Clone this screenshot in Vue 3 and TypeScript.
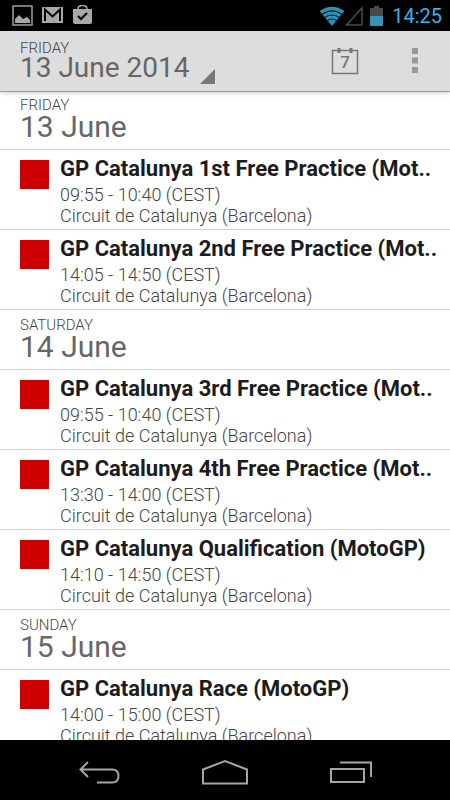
<script setup lang="ts">
interface AgendaEvent {
  title: string
  time: string
  place: string
}

interface AgendaDay {
  weekday: string
  date: string
  events: AgendaEvent[]
}

const place = 'Circuit de Catalunya (Barcelona)'

const days: AgendaDay[] = [
  {
    weekday: 'FRIDAY',
    date: '13 June',
    events: [
      { title: 'GP Catalunya 1st Free Practice (Mot..', time: '09:55 - 10:40 (CEST)', place },
      { title: 'GP Catalunya 2nd Free Practice (Mot..', time: '14:05 - 14:50 (CEST)', place },
    ],
  },
  {
    weekday: 'SATURDAY',
    date: '14 June',
    events: [
      { title: 'GP Catalunya 3rd Free Practice (Mot..', time: '09:55 - 10:40 (CEST)', place },
      { title: 'GP Catalunya 4th Free Practice (Mot..', time: '13:30 - 14:00 (CEST)', place },
      { title: 'GP Catalunya Qualification (MotoGP)', time: '14:10 - 14:50 (CEST)', place },
    ],
  },
  {
    weekday: 'SUNDAY',
    date: '15 June',
    events: [{ title: 'GP Catalunya Race (MotoGP)', time: '14:00 - 15:00 (CEST)', place }],
  },
]
</script>

<template>
  <div class="screen">
    <div class="status">
      <div class="notices">
        <svg width="21" height="21" viewBox="0 0 21 21" aria-hidden="true">
          <rect x="1" y="1" width="19" height="19" fill="none" stroke="#a0a0a0" stroke-width="1.5" />
          <path d="M3 18v-4l2-2 2-2 2 2 2 2 2-1 2-1 3 3v3z" fill="#a8a8a8" />
        </svg>
        <svg width="21" height="21" viewBox="0 0 21 21" aria-hidden="true">
          <rect x="0" y="2" width="21" height="16" fill="#a8a8a8" />
          <path d="M3 16V4.500l7.500 7L18 4.500V16" fill="none" stroke="#000" stroke-width="2" />
        </svg>
        <svg width="21" height="21" viewBox="0 0 21 21" aria-hidden="true">
          <path d="M6 5V4q0-3.500 4.500-3.500T15 4v1" fill="none" stroke="#a8a8a8" stroke-width="1.500" />
          <path d="M1 4h19v13q0 2-2 2H3q-2 0-2-2z" fill="#a8a8a8" />
          <path d="M6 11l3 3 6-6" fill="none" stroke="#000" stroke-width="2.200" />
        </svg>
      </div>
      <div class="signals">
        <svg width="26" height="20" viewBox="0 0 26 20" aria-hidden="true">
          <path d="M0.500 5Q13-3.500 25.500 5L13 20z" fill="#2f8fb8" />
          <path d="M3 8.200Q13 1.500 23 8.200M5.500 11.500Q13 6.500 20.500 11.500M8.500 14.500Q13 11.500 17.500 14.500" fill="none" stroke="#04151c" stroke-width="1.100" />
        </svg>
        <svg class="cell" width="18" height="20" viewBox="0 0 18 20" aria-hidden="true">
          <path d="M1.500 19H17V2z" fill="none" stroke="#4c4c4c" stroke-width="1.500" />
        </svg>
        <svg width="13" height="20" viewBox="0 0 13 20" aria-hidden="true">
          <path d="M0 2h4V0h5v2h4v8H0z" fill="#4a4a4a" />
          <path d="M0 10h13v10H0z" fill="#3593ba" />
        </svg>
        <span class="clock">14:25</span>
      </div>
    </div>

    <header class="bar">
      <button class="picker" type="button">
        <span class="heading">
          <span class="weekday">FRIDAY</span>
          <span class="date bar-date">13 June 2014</span>
        </span>
        <svg width="15" height="15" viewBox="0 0 15 15" aria-hidden="true">
          <path d="M15 0v15H0z" fill="#777" />
        </svg>
      </button>
      <div class="actions">
        <button class="icon-button" type="button" aria-label="Go to today">
          <svg width="28" height="28" viewBox="0 0 28 28" aria-hidden="true">
            <path d="M1.500 3.500h25v23h-25z" fill="none" stroke="#777" stroke-width="1.500" />
            <path d="M6.500 1h3v5h-3zM18.500 1h3v5h-3z" fill="#777" />
            <text class="today" x="14" y="21" text-anchor="middle">7</text>
          </svg>
        </button>
        <button class="icon-button" type="button" aria-label="More options">
          <svg width="6" height="26" viewBox="0 0 6 26" aria-hidden="true">
            <path d="M0 0h6v6H0zM0 9.500h6v6H0zM0 19h6v6H0z" fill="#999" />
          </svg>
        </button>
      </div>
    </header>

    <main class="agenda">
      <section v-for="day in days" :key="day.date">
        <h2 class="day">
          <span class="weekday">{{ day.weekday }}</span>
          <span class="date">{{ day.date }}</span>
        </h2>
        <article v-for="event in day.events" :key="event.title" class="event">
          <span class="swatch"></span>
          <div class="details">
            <h3 class="title">{{ event.title }}</h3>
            <p class="line">{{ event.time }}</p>
            <p class="line">{{ event.place }}</p>
          </div>
        </article>
      </section>
    </main>

    <nav class="nav">
      <button class="nav-button" type="button" aria-label="Back">
        <svg width="44" height="24" viewBox="0 0 44 24" aria-hidden="true">
          <path d="M11 2L3.500 9.500L11 17M4 9.500H35Q41.500 9.500 41.500 16T35 22.500H20" fill="none" stroke="#a5a5a5" stroke-width="2" />
        </svg>
      </button>
      <button class="nav-button" type="button" aria-label="Home">
        <svg width="48" height="26" viewBox="0 0 48 26" aria-hidden="true">
          <path d="M2 24.500V10.500L24 2l22 8.500v14z" fill="none" stroke="#a5a5a5" stroke-width="2" />
        </svg>
      </button>
      <button class="nav-button" type="button" aria-label="Recent apps">
        <svg width="44" height="24" viewBox="0 0 44 24" aria-hidden="true">
          <path d="M2 9h33v13H2zM11 2.500h31V17" fill="none" stroke="#a5a5a5" stroke-width="2" />
        </svg>
      </button>
    </nav>
  </div>
</template>

<style>
body {
  margin: 0;
}
</style>

<style scoped>
.screen {
  display: flex;
  flex-direction: column;
  height: 100vh;
  overflow: hidden;
  background: #fff;
  color: #444;
  font-family: Roboto, "Liberation Sans", sans-serif;
}

button {
  border: 0;
  padding: 0;
  background: none;
  color: inherit;
  font: inherit;
  text-align: left;
}

svg {
  display: block;
  flex: none;
}

.status {
  display: flex;
  flex: none;
  align-items: center;
  justify-content: space-between;
  height: 31px;
  padding: 0 8px 0 12px;
  background: #000;
}

.notices {
  display: flex;
  gap: 9px;
}

.signals {
  display: flex;
  align-items: center;
  gap: 7px;
}

.cell {
  margin-left: -7px;
}

.clock {
  padding-left: 2px;
  color: #33b5e5;
  font-size: 20px;
  line-height: 30px;
}

.bar {
  position: relative;
  z-index: 1;
  display: flex;
  flex: none;
  justify-content: space-between;
  box-sizing: border-box;
  height: 61px;
  margin-bottom: -2px;
  border-bottom: 1px solid #999;
  background: #ddd;
  box-shadow: 0 1px 5px rgba(0, 0, 0, 0.2);
}

.picker {
  display: flex;
  align-items: flex-end;
  gap: 10px;
  padding: 0 0 7px 20px;
}

.heading {
  display: flex;
  flex-direction: column;
  padding-bottom: 4px;
}

.weekday {
  display: block;
  font-size: 15px;
  font-weight: 300;
  line-height: 16px;
}

.date {
  display: block;
  color: #666;
  font-size: 30px;
  font-weight: 400;
  line-height: 28px;
}

.bar-date {
  font-size: 28px;
  line-height: 24px;
}

.actions {
  display: flex;
}

.icon-button {
  display: flex;
  align-items: center;
  justify-content: center;
  width: 70px;
}

.today {
  fill: #777;
  font-size: 17px;
  font-weight: 500;
}

.agenda {
  flex: 1;
  min-height: 0;
  overflow: hidden;
}

.day {
  box-sizing: border-box;
  height: 60px;
  margin: 0;
  padding: 7px 20px 0;
  border-bottom: 1px solid #d0d0d0;
}

.event {
  display: flex;
  gap: 11px;
  box-sizing: border-box;
  height: 80px;
  padding: 4px 0 0 20px;
  border-bottom: 1px solid #d0d0d0;
}

.swatch {
  flex: none;
  width: 29px;
  height: 29px;
  margin-top: 6px;
  background: #c00;
}

.title {
  margin: 0;
  color: #1c1c1c;
  font-size: 22px;
  font-weight: 700;
  line-height: 30px;
  white-space: nowrap;
}

.line {
  margin: 0;
  font-size: 18px;
  font-weight: 300;
  line-height: 21px;
  white-space: nowrap;
}

.nav {
  display: flex;
  flex: none;
  justify-content: center;
  height: 60px;
  background: #000;
}

.nav-button {
  display: flex;
  align-items: center;
  justify-content: center;
  width: 28%;
  padding-top: 3px;
}
</style>
